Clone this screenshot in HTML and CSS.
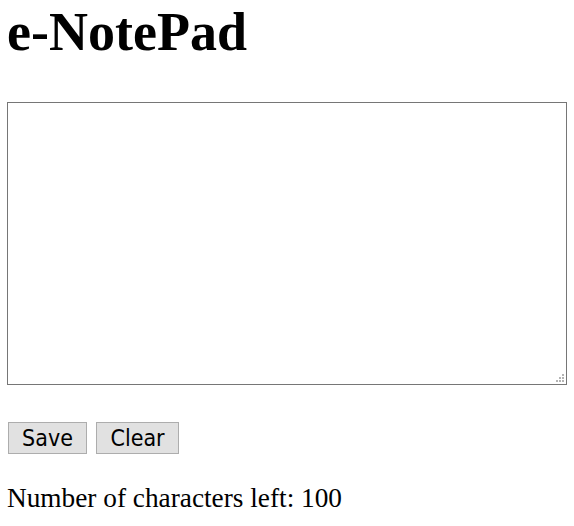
FILE: index.html
```html
<!DOCTYPE html>
<html lang="en">
<head>
    <meta charset="UTF-8">
    <title>e-NotePad</title>
    <link rel="stylesheet" href="styles.css">
</head>
<body>
    <h1 class="title">e-NotePad</h1>
    <div class="note-wrap">
        <textarea id="note" class="note" maxlength="100"></textarea>
        <svg class="grip" width="8" height="8" viewBox="0 0 8 8" aria-hidden="true">
            <rect x="6" y="0" width="2" height="2"/>
            <rect x="3" y="3" width="2" height="2"/>
            <rect x="6" y="3" width="2" height="2"/>
            <rect x="0" y="6" width="2" height="2"/>
            <rect x="3" y="6" width="2" height="2"/>
            <rect x="6" y="6" width="2" height="2"/>
        </svg>
    </div>
    <div class="actions">
        <button type="button" id="save" class="btn btn-save">Save</button>
        <button type="button" id="clear" class="btn btn-clear">Clear</button>
    </div>
    <p class="counter">Number of characters left: <span id="left">100</span></p>

    <script>
        var note = document.getElementById('note');
        var left = document.getElementById('left');

        function updateCount() {
            left.textContent = 100 - note.value.length;
        }

        note.addEventListener('input', updateCount);

        document.getElementById('save').addEventListener('click', function() {
            localStorage.setItem('note', note.value);
        });

        document.getElementById('clear').addEventListener('click', function() {
            note.value = '';
            updateCount();
        });
    </script>
</body>
</html>
```

FILE: styles.css
```css
body {
    margin: 0 7px;
    font-family: 'Liberation Serif', 'Times New Roman', serif;
    color: #000;
    background: #fff;
}

.title {
    margin: 0;
    font-size: 54px;
    font-weight: bold;
    line-height: 64px;
}

.note-wrap {
    position: relative;
    width: 560px;
    margin-top: 38px;
}

.note {
    display: block;
    box-sizing: border-box;
    width: 560px;
    height: 283px;
    margin: 0;
    border: 1px solid #767676;
    padding: 2px;
    resize: none;
    font-family: 'Liberation Mono', monospace;
    font-size: 13px;
}

.grip {
    position: absolute;
    right: 3px;
    bottom: 3px;
    fill: #b4b4b4;
    pointer-events: none;
}

.actions {
    display: flex;
    gap: 9px;
    margin: 37px 0 0 1px;
}

.btn {
    box-sizing: border-box;
    height: 32px;
    padding: 0;
    border: 1px solid #adadad;
    background-color: #e1e1e1;
    color: #000;
    font-family: 'DejaVu Sans Condensed', 'DejaVu Sans', sans-serif;
    font-size: 23px;
    line-height: 1;
    text-align: center;
}

.btn-save {
    width: 79px;
}

.btn-clear {
    width: 83px;
}

.counter {
    margin: 29px 0 0;
    font-size: 27.3px;
    line-height: 31px;
}
```
